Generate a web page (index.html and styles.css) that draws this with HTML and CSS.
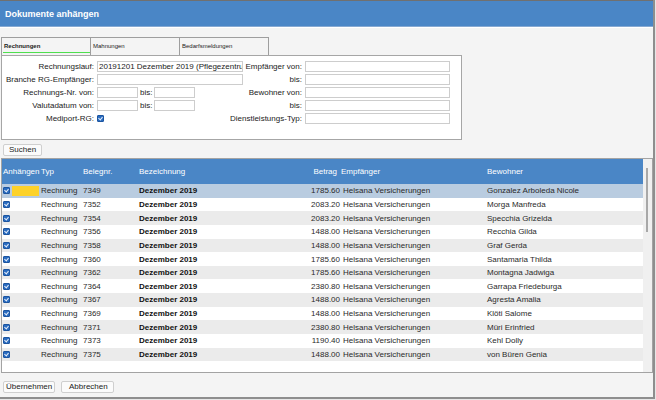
FILE: index.html
```html
<!DOCTYPE html>
<html lang="de">
<head>
<meta charset="utf-8">
<title>Dokumente anhängen</title>
<link rel="stylesheet" href="styles.css">
</head>
<body>
<div class="window">
  <div class="titlebar"><span class="title">Dokumente anhängen</span></div>
  <div class="content">
    <div class="tabs">
      <div class="tab active">Rechnungen</div>
      <div class="tab">Mahnungen</div>
      <div class="tab">Bedarfsmeldungen</div>
    </div>
    <div class="panel">
      <div class="form">
        <div class="lbl"><span>Rechnungslauf:</span></div>
        <div class="input">20191201 Dezember 2019 (Pflegezentru</div>
        <div class="lbl"><span>Empfänger von:</span></div>
        <div class="input"></div>

        <div class="lbl"><span>Branche RG-Empfänger:</span></div>
        <div class="input"></div>
        <div class="lbl"><span>bis:</span></div>
        <div class="input"></div>

        <div class="lbl"><span>Rechnungs-Nr. von:</span></div>
        <div class="pair"><div class="input small"></div><span class="bis">bis:</span><div class="input small"></div></div>
        <div class="lbl"><span>Bewohner von:</span></div>
        <div class="input"></div>

        <div class="lbl"><span>Valutadatum von:</span></div>
        <div class="pair"><div class="input small"></div><span class="bis">bis:</span><div class="input small"></div></div>
        <div class="lbl"><span>bis:</span></div>
        <div class="input"></div>

        <div class="lbl"><span>Mediport-RG:</span></div>
        <div class="pair"><span class="cb"></span></div>
        <div class="lbl"><span>Dienstleistungs-Typ:</span></div>
        <div class="input"></div>
      </div>
    </div>
    <div class="btnrow search"><span class="btn">Suchen</span></div>

    <div class="grid">
      <div class="grid-main">
        <div class="row head">
          <div class="c c1">Anhängen</div>
          <div class="c c2">Typ</div>
          <div class="c c3">Belegnr.</div>
          <div class="c c4">Bezeichnung</div>
          <div class="c c5">Betrag</div>
          <div class="c c6">Empfänger</div>
          <div class="c c7">Bewohner</div>
        </div>
        <div class="body">
          <div class="row sel"><div class="c c1"><span class="cb"></span><span class="edit"></span></div><div class="c c2">Rechnung</div><div class="c c3">7349</div><div class="c c4">Dezember 2019</div><div class="c c5">1785.60</div><div class="c c6">Helsana Versicherungen</div><div class="c c7">Gonzalez Arboleda Nicole</div></div>
          <div class="row"><div class="c c1"><span class="cb"></span></div><div class="c c2">Rechnung</div><div class="c c3">7352</div><div class="c c4">Dezember 2019</div><div class="c c5">2083.20</div><div class="c c6">Helsana Versicherungen</div><div class="c c7">Morga Manfreda</div></div>
          <div class="row alt"><div class="c c1"><span class="cb"></span></div><div class="c c2">Rechnung</div><div class="c c3">7354</div><div class="c c4">Dezember 2019</div><div class="c c5">2083.20</div><div class="c c6">Helsana Versicherungen</div><div class="c c7">Specchia Grizelda</div></div>
          <div class="row"><div class="c c1"><span class="cb"></span></div><div class="c c2">Rechnung</div><div class="c c3">7356</div><div class="c c4">Dezember 2019</div><div class="c c5">1488.00</div><div class="c c6">Helsana Versicherungen</div><div class="c c7">Recchia Gilda</div></div>
          <div class="row alt"><div class="c c1"><span class="cb"></span></div><div class="c c2">Rechnung</div><div class="c c3">7358</div><div class="c c4">Dezember 2019</div><div class="c c5">1488.00</div><div class="c c6">Helsana Versicherungen</div><div class="c c7">Graf Gerda</div></div>
          <div class="row"><div class="c c1"><span class="cb"></span></div><div class="c c2">Rechnung</div><div class="c c3">7360</div><div class="c c4">Dezember 2019</div><div class="c c5">1785.60</div><div class="c c6">Helsana Versicherungen</div><div class="c c7">Santamaria Thilda</div></div>
          <div class="row alt"><div class="c c1"><span class="cb"></span></div><div class="c c2">Rechnung</div><div class="c c3">7362</div><div class="c c4">Dezember 2019</div><div class="c c5">1785.60</div><div class="c c6">Helsana Versicherungen</div><div class="c c7">Montagna Jadwiga</div></div>
          <div class="row"><div class="c c1"><span class="cb"></span></div><div class="c c2">Rechnung</div><div class="c c3">7364</div><div class="c c4">Dezember 2019</div><div class="c c5">2380.80</div><div class="c c6">Helsana Versicherungen</div><div class="c c7">Garrapa Friedeburga</div></div>
          <div class="row alt"><div class="c c1"><span class="cb"></span></div><div class="c c2">Rechnung</div><div class="c c3">7367</div><div class="c c4">Dezember 2019</div><div class="c c5">1488.00</div><div class="c c6">Helsana Versicherungen</div><div class="c c7">Agresta Amalia</div></div>
          <div class="row"><div class="c c1"><span class="cb"></span></div><div class="c c2">Rechnung</div><div class="c c3">7369</div><div class="c c4">Dezember 2019</div><div class="c c5">1488.00</div><div class="c c6">Helsana Versicherungen</div><div class="c c7">Klöti Salome</div></div>
          <div class="row alt"><div class="c c1"><span class="cb"></span></div><div class="c c2">Rechnung</div><div class="c c3">7371</div><div class="c c4">Dezember 2019</div><div class="c c5">2380.80</div><div class="c c6">Helsana Versicherungen</div><div class="c c7">Müri Erinfried</div></div>
          <div class="row"><div class="c c1"><span class="cb"></span></div><div class="c c2">Rechnung</div><div class="c c3">7373</div><div class="c c4">Dezember 2019</div><div class="c c5">1190.40</div><div class="c c6">Helsana Versicherungen</div><div class="c c7">Kehl Dolly</div></div>
          <div class="row alt"><div class="c c1"><span class="cb"></span></div><div class="c c2">Rechnung</div><div class="c c3">7375</div><div class="c c4">Dezember 2019</div><div class="c c5">1488.00</div><div class="c c6">Helsana Versicherungen</div><div class="c c7">von Büren Genia</div></div>
        </div>
      </div>
      <div class="vscroll"><div class="thumb"></div></div>
    </div>

    <div class="btnrow bottom"><span class="btn">Übernehmen</span><span class="btn">Abbrechen</span></div>
  </div>
</div>
</body>
</html>
```

FILE: styles.css
```css
* { box-sizing: border-box; }
html, body { margin: 0; padding: 0; }
body {
  width: 656px;
  height: 400px;
  background: #e6e6e6;
  font-family: "Liberation Sans", Arial, sans-serif;
  font-size: 8px;
  color: #222;
  overflow: hidden;
}
.window {
  width: 655px;
  height: 399px;
  background: #f4f4f4;
  border-right: 2px solid #8e8e8e;
  border-bottom: 2px solid #8e8e8e;
  display: flex;
  flex-direction: column;
}
.titlebar {
  height: 28px;
  border-top: 1px solid #707070;
  border-bottom: 1px solid #ffffff;
  background: #4a86c6;
  box-shadow: inset 0 -1px 0 #86a9d2;
  display: flex;
  align-items: center;
  padding-left: 5px;
  padding-bottom: 1px;
}
.title {
  color: #fff;
  font-weight: bold;
  font-size: 9px;
}
.content {
  padding-left: 1px;
  display: flex;
  flex-direction: column;
}
.tabs {
  display: flex;
  margin-top: 9px;
  height: 18px;
}
.tab {
  width: 90px;
  height: 18px;
  border: 1px solid #9e9e9e;
  border-bottom: none;
  margin-right: -1px;
  background: #f4f4f4;
  font-size: 6px;
  color: #222;
  padding: 0 0 2px 2px;
  display: flex;
  align-items: center;
  position: relative;
}
.tab.active { font-weight: bold; }
.tab.active::after {
  content: "";
  position: absolute;
  left: 1px;
  right: 0;
  bottom: 2px;
  height: 1px;
  background: #4fe04f;
}
.panel {
  width: 461px;
  height: 85px;
  background: #fff;
  border: 1px solid #a6a6a6;
  padding-top: 5px;
}
.form {
  display: grid;
  grid-template-columns: 95px 146px 62px 145px;
  grid-auto-rows: 11px;
  row-gap: 2px;
}
.lbl {
  display: flex;
  justify-content: flex-end;
  padding-right: 3px;
  line-height: 11px;
  white-space: nowrap;
  color: #222;
  min-width: 0;
}
.lbl span { flex: none; }
.input {
  height: 11px;
  background: #fff;
  border: 1px solid #cdcdcd;
  line-height: 9px;
  padding-left: 1px;
  overflow: hidden;
  white-space: nowrap;
  color: #222;
}
.pair {
  display: flex;
  align-items: center;
}
.input.small { width: 41px; }
.bis {
  width: 16px;
  padding-left: 2px;
  line-height: 11px;
}
.cb {
  display: inline-block;
  width: 7px;
  height: 7px;
  background: #2a6cc0;
  border: 1px solid #1c55a0;
  border-radius: 1px;
  position: relative;
  flex: none;
}
.cb::after {
  content: "";
  position: absolute;
  left: 1px;
  top: 0;
  width: 2px;
  height: 3px;
  border-right: 1px solid #e6eefa;
  border-bottom: 1px solid #e6eefa;
  transform: rotate(40deg);
}
.btnrow {
  display: flex;
  gap: 6px;
  padding-left: 2px;
}
.search { margin-top: 4px; }
.bottom { margin-top: 8px; }
.btn {
  height: 12px;
  border: 1px solid #cfcfcf;
  border-radius: 2px;
  background: #fbfbfb;
  line-height: 10px;
  padding: 0 3px;
  color: #222;
}
.search .btn { width: 39px; padding-left: 5px; }
.bottom .btn:first-child { width: 52px; padding-left: 2px; }
.bottom .btn:last-child { width: 53px; padding-left: 7px; }
.grid {
  margin-top: 2px;
  width: 652px;
  height: 215px;
  border: 1px solid #a3a3a3;
  background: #fff;
  display: flex;
}
.grid-main {
  width: 641px;
  display: flex;
  flex-direction: column;
}
.row {
  display: grid;
  grid-template-columns: 38px 41px 56px 150px 54px 144px 1fr;
  height: 13.65px;
  align-items: center;
  white-space: nowrap;
  color: #2a2a2a;
}
.row.head {
  height: 25px;
  background: #4a86c6;
  color: #fff;
}
.row.sel { background: #b9cce0; }
.row.alt { background: #ebebeb; }
.c { overflow: hidden; }
.c1 { padding-left: 1px; display: flex; align-items: center; }
.c2 { padding-left: 1px; }
.c3 { padding-left: 2px; }
.c4 { padding-left: 2px; font-weight: bold; color: #111; }
.c5 { text-align: right; padding-right: 1px; }
.c6 { padding-left: 2px; }
.c7 { padding-left: 2px; }
.head .c4 { font-weight: normal; color: #fff; }
.head .c5 { padding-right: 4px; }
.head .c6 { padding-left: 0; }
.edit {
  display: inline-block;
  width: 27px;
  height: 10px;
  margin-left: 2px;
  background: #fdd22a;
}
.vscroll {
  width: 9px;
  background: #f0f0f0;
  position: relative;
}
.thumb {
  position: absolute;
  left: 3px;
  top: 9px;
  width: 2px;
  height: 64px;
  background: #a8a8a8;
}
```
